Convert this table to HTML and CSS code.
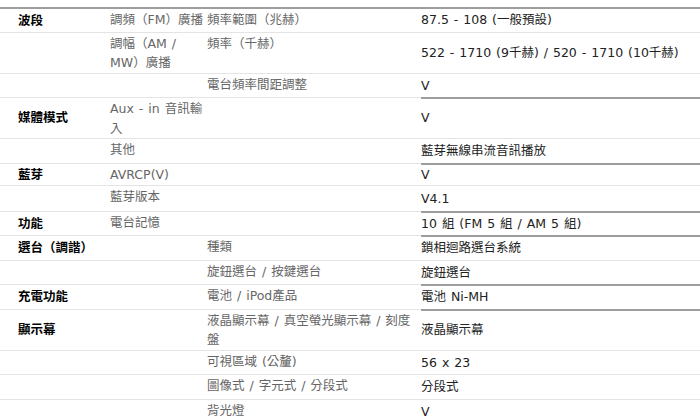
FILE: index.html
```html
<!DOCTYPE html>
<html lang="zh-Hant">
<head>
<meta charset="utf-8">
<title>規格</title>
<link rel="stylesheet" href="styles.css">
</head>
<body>
<div class="spec">
  <div class="row first">
    <div class="c k">波段</div><div class="c s2">調頻（FM）廣播</div><div class="c s3">頻率範圍（兆赫）</div><div class="c v">87.5 - 108 (一般預設)</div>
  </div>
  <div class="row">
    <div class="c k"></div><div class="c s2">調幅（AM / MW）廣播</div><div class="c s3">頻率（千赫）</div><div class="c v">522 - 1710 (9千赫) / 520 - 1710 (10千赫)</div>
  </div>
  <div class="row">
    <div class="c k"></div><div class="c s2"></div><div class="c s3">電台頻率間距調整</div><div class="c v">V</div>
  </div>
  <div class="row grp">
    <div class="c k">媒體模式</div><div class="c s2">Aux - in 音訊輸入</div><div class="c s3"></div><div class="c v">V</div>
  </div>
  <div class="row">
    <div class="c k"></div><div class="c s2">其他</div><div class="c s3"></div><div class="c v">藍芽無線串流音訊播放</div>
  </div>
  <div class="row grp short">
    <div class="c k">藍芽</div><div class="c s2">AVRCP(V)</div><div class="c s3"></div><div class="c v">V</div>
  </div>
  <div class="row roomy">
    <div class="c k"></div><div class="c s2">藍芽版本</div><div class="c s3"></div><div class="c v">V4.1</div>
  </div>
  <div class="row grp">
    <div class="c k">功能</div><div class="c s2">電台記憶</div><div class="c s3"></div><div class="c v">10 組 (FM 5 組 / AM 5 組)</div>
  </div>
  <div class="row grp">
    <div class="c k">選台（調諧）</div><div class="c s2"></div><div class="c s3">種類</div><div class="c v">鎖相迴路選台系統</div>
  </div>
  <div class="row">
    <div class="c k"></div><div class="c s2"></div><div class="c s3">旋鈕選台 / 按鍵選台</div><div class="c v">旋鈕選台</div>
  </div>
  <div class="row grp">
    <div class="c k">充電功能</div><div class="c s2"></div><div class="c s3">電池 / iPod產品</div><div class="c v">電池 Ni-MH</div>
  </div>
  <div class="row grp">
    <div class="c k">顯示幕</div><div class="c s2"></div><div class="c s3">液晶顯示幕 / 真空螢光顯示幕 / 刻度盤</div><div class="c v">液晶顯示幕</div>
  </div>
  <div class="row">
    <div class="c k"></div><div class="c s2"></div><div class="c s3">可視區域 (公釐)</div><div class="c v">56 x 23</div>
  </div>
  <div class="row">
    <div class="c k"></div><div class="c s2"></div><div class="c s3">圖像式 / 字元式 / 分段式</div><div class="c v">分段式</div>
  </div>
  <div class="row">
    <div class="c k"></div><div class="c s2"></div><div class="c s3">背光燈</div><div class="c v">V</div>
  </div>
</div>
</body>
</html>
```
FILE: styles.css
```css
html, body {
  background: #fff;
}
body {
  margin: 0;
  padding-top: 7px;
  font-family: "DejaVu Sans", "Noto Sans CJK TC", sans-serif;
  font-size: 12.5px;
  line-height: 19.5px;
  word-spacing: 1px;
  color: #222;
}
.spec {
  width: 100%;
}
.row {
  display: grid;
  grid-template-columns: 110px 97px 214px 1fr;
}
.c {
  border-top: 1px solid #e4e4e4;
}
.k {
  padding-left: 18px;
  font-weight: bold;
  color: #000;
  display: flex;
  align-items: center;
}
.s2, .s3 {
  padding-top: 1px;
  color: #666;
}
.s2 {
  padding-right: 2px;
}
.s3 {
  padding-right: 8px;
}
.v {
  padding: 2px 0;
  color: #222;
  display: flex;
  align-items: center;
}
.first .c {
  border-top: 2px solid #9d9d9d;
}
.first .v {
  padding-top: 1px;
}
.grp .v {
  border-top: 2px solid #9d9d9d;
  padding-top: 1px;
}
.short .v {
  padding-top: 0;
  padding-bottom: 1px;
}
.roomy .v {
  padding-top: 3px;
}
```
